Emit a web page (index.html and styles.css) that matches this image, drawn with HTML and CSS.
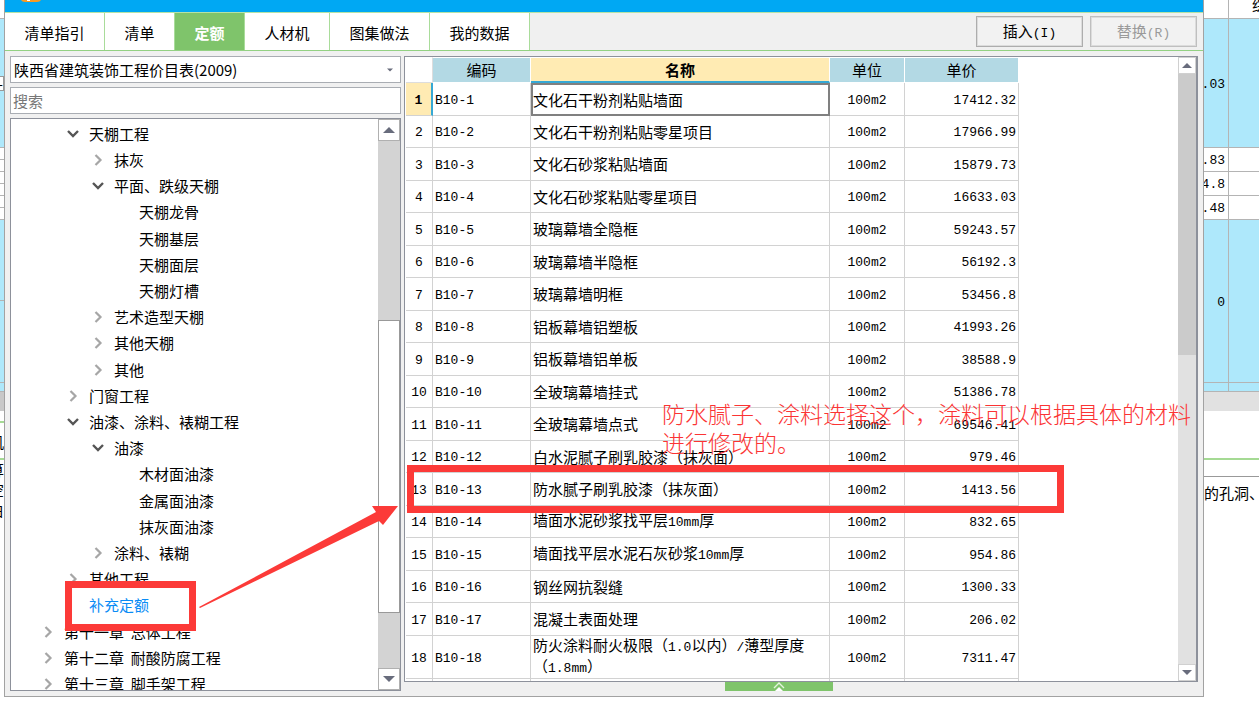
FILE: index.html
```html
<!DOCTYPE html>
<html lang="zh-CN">
<head>
<meta charset="utf-8">
<title>定额</title>
<link rel="stylesheet" href="styles.css">
</head>
<body>
<svg class="defs" aria-hidden="true">
  <symbol id="open" viewBox="0 0 12 12"><path d="M1 3 6 8 11 3" fill="none" stroke="#555" stroke-width="2.4"/></symbol>
  <symbol id="shut" viewBox="0 0 12 12"><path d="M3.5 1 8.5 6 3.5 11" fill="none" stroke="#a6a6a6" stroke-width="2.2"/></symbol>
  <symbol id="up" viewBox="0 0 12 6"><path d="M0 6 6 0 12 6Z" fill="#686c7c"/></symbol>
  <symbol id="down" viewBox="0 0 12 6"><path d="M0 0 6 6 12 0Z" fill="#686c7c"/></symbol>
</svg>
<div class="desktop">
  <div class="back back-left">
    <div class="cell h19"></div>
    <div class="cell blue h129"><span class="mini">-</span></div>
    <div class="cell h12"></div><div class="cell h12"></div><div class="cell h12"></div>
    <div class="cell h12"></div><div class="cell h12"></div><div class="cell h12"></div>
    <div class="cell blue h81"></div><div class="cell blue h82"></div>
    <div class="cell blue h9"></div>
    <div class="gray dark"></div>
    <div class="green h12"></div>
    <div class="green h37"><span>机</span></div>
    <div class="frag"><span>算</span></div>
    <div class="frag"><span>空</span></div>
    <div class="frag"><span>白</span></div>
  </div>

  <main class="dialog">
    <div class="titlebar"><svg class="logo" viewBox="0 0 20 3"><path d="M0 0h20q-1 2-4 2H4Q1 2 0 0Z" fill="#f79a22"/><path d="M6 0h3v1H6z" fill="#fff"/></svg></div>
    <nav class="toolbar">
      <button class="tab w100">清单指引</button>
      <button class="tab w70">清单</button>
      <button class="tab w70 active">定额</button>
      <button class="tab w85">人材机</button>
      <button class="tab w100">图集做法</button>
      <button class="tab w100">我的数据</button>
      <div class="actions">
        <button class="action">插入<span class="mono">(I)</span></button>
        <button class="action" disabled>替换<span class="mono">(R)</span></button>
      </div>
    </nav>
    <div class="content">
      <aside class="side">
        <div class="picker">
          <select aria-label="价目表"><option>陕西省建筑装饰工程价目表(2009)</option></select>
          <svg class="caret"><use href="#down"/></svg>
        </div>
        <input class="search" type="text" placeholder="搜索" aria-label="搜索">
        <div class="treebox">
          <ul class="tree">
            <li class="l2"><svg><use href="#open"/></svg>天棚工程</li>
            <li class="l3"><svg><use href="#shut"/></svg>抹灰</li>
            <li class="l3"><svg><use href="#open"/></svg>平面、跌级天棚</li>
            <li class="l4">天棚龙骨</li>
            <li class="l4">天棚基层</li>
            <li class="l4">天棚面层</li>
            <li class="l4">天棚灯槽</li>
            <li class="l3"><svg><use href="#shut"/></svg>艺术造型天棚</li>
            <li class="l3"><svg><use href="#shut"/></svg>其他天棚</li>
            <li class="l3"><svg><use href="#shut"/></svg>其他</li>
            <li class="l2"><svg><use href="#shut"/></svg>门窗工程</li>
            <li class="l2"><svg><use href="#open"/></svg>油漆、涂料、裱糊工程</li>
            <li class="l3"><svg><use href="#open"/></svg>油漆</li>
            <li class="l4">木材面油漆</li>
            <li class="l4">金属面油漆</li>
            <li class="l4">抹灰面油漆</li>
            <li class="l3"><svg><use href="#shut"/></svg>涂料、裱糊</li>
            <li class="l2"><svg><use href="#shut"/></svg>其他工程</li>
            <li class="l2 leaf chosen">补充定额</li>
            <li class="l1"><svg><use href="#shut"/></svg>第十一章&nbsp; 总体工程</li>
            <li class="l1"><svg><use href="#shut"/></svg>第十二章&nbsp; 耐酸防腐工程</li>
            <li class="l1"><svg><use href="#shut"/></svg>第十三章&nbsp; 脚手架工程</li>
          </ul>
          <div class="scroll tree-scroll">
            <div class="arrow"><svg><use href="#up"/></svg></div>
            <div class="before"></div><div class="thumb"></div><div class="after"></div>
            <div class="arrow"><svg><use href="#down"/></svg></div>
          </div>
        </div>
      </aside>

      <section class="right">
        <div class="gridbox">
          <div class="gridview">
          <table>
            <colgroup><col class="c-no"><col class="c-code"><col class="c-name"><col class="c-unit"><col class="c-price"></colgroup>
            <thead><tr><th class="corner"></th><th>编码</th><th class="current">名称</th><th>单位</th><th>单价</th></tr></thead>
            <tbody>
              <tr class="selected"><td>1</td><td>B10-1</td><td>文化石干粉剂粘贴墙面</td><td>100m2</td><td>17412.32</td></tr>
              <tr><td>2</td><td>B10-2</td><td>文化石干粉剂粘贴零星项目</td><td>100m2</td><td>17966.99</td></tr>
              <tr><td>3</td><td>B10-3</td><td>文化石砂浆粘贴墙面</td><td>100m2</td><td>15879.73</td></tr>
              <tr><td>4</td><td>B10-4</td><td>文化石砂浆粘贴零星项目</td><td>100m2</td><td>16633.03</td></tr>
              <tr><td>5</td><td>B10-5</td><td>玻璃幕墙全隐框</td><td>100m2</td><td>59243.57</td></tr>
              <tr><td>6</td><td>B10-6</td><td>玻璃幕墙半隐框</td><td>100m2</td><td>56192.3</td></tr>
              <tr><td>7</td><td>B10-7</td><td>玻璃幕墙明框</td><td>100m2</td><td>53456.8</td></tr>
              <tr><td>8</td><td>B10-8</td><td>铝板幕墙铝塑板</td><td>100m2</td><td>41993.26</td></tr>
              <tr><td>9</td><td>B10-9</td><td>铝板幕墙铝单板</td><td>100m2</td><td>38588.9</td></tr>
              <tr><td>10</td><td>B10-10</td><td>全玻璃幕墙挂式</td><td>100m2</td><td>51386.78</td></tr>
              <tr><td>11</td><td>B10-11</td><td>全玻璃幕墙点式</td><td>100m2</td><td>69546.41</td></tr>
              <tr><td>12</td><td>B10-12</td><td>白水泥腻子刷乳胶漆（抹灰面）</td><td>100m2</td><td>979.46</td></tr>
              <tr><td>13</td><td>B10-13</td><td>防水腻子刷乳胶漆（抹灰面）</td><td>100m2</td><td>1413.56</td></tr>
              <tr><td>14</td><td>B10-14</td><td>墙面水泥砂浆找平层<span class="mono">10mm</span>厚</td><td>100m2</td><td>832.65</td></tr>
              <tr><td>15</td><td>B10-15</td><td>墙面找平层水泥石灰砂浆<span class="mono">10mm</span>厚</td><td>100m2</td><td>954.86</td></tr>
              <tr><td>16</td><td>B10-16</td><td>钢丝网抗裂缝</td><td>100m2</td><td>1300.33</td></tr>
              <tr><td>17</td><td>B10-17</td><td>混凝土表面处理</td><td>100m2</td><td>206.02</td></tr>
              <tr class="tall"><td>18</td><td>B10-18</td><td>防火涂料耐火极限（<span class="mono">1.0</span>以内）<span class="mono">/</span>薄型厚度<br>（<span class="mono">1.8mm</span>）</td><td>100m2</td><td>7311.47</td></tr>
              <tr><td></td><td></td><td></td><td></td><td></td></tr>
            </tbody>
          </table>
          </div>
          <div class="scroll grid-scroll">
            <div class="arrow"><svg><use href="#up"/></svg></div>
            <div class="thumb"></div><div class="after"></div>
            <div class="arrow"><svg><use href="#down"/></svg></div>
          </div>
        </div>
        <button class="handle" aria-label="展开"><svg viewBox="0 0 12 9"><path d="M1 6 6 1 11 6" fill="none" stroke="#e4f5dd" stroke-width="1.4"/><path d="M2 9 6 5 10 9Z" fill="#fff"/></svg></button>
      </section>
    </div>

    <div class="mark mark-tree"></div>
    <div class="mark mark-row"></div>
    <svg class="pointer" viewBox="0 0 200 104"><path d="M0 102 177 7 173 1 199 1 184 20 180 16 1 103Z" fill="#fc3a38"/></svg>
    <p class="note">防水腻子、涂料选择这个，涂料可以根据具体的材料<br>进行修改的。</p>
  </main>

  <div class="back back-right">
    <div class="pair h19"><span></span><span class="head">综</span></div>
    <div class="pair blue h129"><span>.03</span><span></span></div>
    <div class="pair h24"><span>.83</span><span></span></div>
    <div class="pair h24"><span>4.8</span><span></span></div>
    <div class="pair h24"><span>.48</span><span></span></div>
    <div class="pair blue h163"><span>0</span><span></span></div>
    <div class="pair blue h9"><span></span><span></span></div>
    <div class="gray"></div>
    <div class="green h49"></div>
    <div class="rule"></div>
    <div class="desc">的孔洞、</div>
  </div>
</div>
</body>
</html>
```

FILE: styles.css
```css
* { box-sizing: border-box; }

body {
  margin: 0;
  background: #fff;
  color: #000;
  font: 15px/20px "Noto Sans CJK SC", sans-serif;
}

button, input, select { font: inherit; color: inherit; border-radius: 0; margin: 0; }

.defs { display: none; }
.mono { font-family: "Liberation Mono", monospace; font-size: 13px; }

.desktop {
  display: grid;
  grid-template-columns: 4px minmax(0, 1fr) 55px;
  height: 100vh;
  overflow: hidden;
}

/* Window behind the dialog */
.back { overflow: hidden; white-space: nowrap; }
.cell { border-bottom: 1px solid #b4b4b4; }
.blue { background: #aee8fb; }
.h9 { height: 9px; }
.h12 { height: 12px; }
.h19 { height: 19px; }
.h24 { height: 24px; }
.h37 { height: 37px; }
.h49 { height: 49px; }
.h81 { height: 81px; }
.h82 { height: 82px; }
.h129 { height: 129px; }
.h163 { height: 163px; }
.gray { height: 19px; background: #e1e1e1; }
.gray.dark { background: #c8c8c8; }
.green { border-bottom: 2px solid #a5da94; }
.back-left span { display: flex; justify-content: flex-end; }
.back-left .green span { padding-top: 9px; }
.back-left .cell { display: flex; align-items: center; justify-content: flex-end; }
.back-left .mini { background: #fff; border: 1px solid #999; border-left: 0; line-height: 13px; width: 4px; }
.frag { height: 20px; }

.pair {
  display: grid;
  grid-template-columns: 25px 1fr;
  align-items: stretch;
  border-bottom: 1px solid #b4b4b4;
  font: 13px/16px "Liberation Mono", monospace;
}
.pair span { display: flex; align-items: center; justify-content: flex-end; overflow: hidden; }
.pair span:first-child { border-right: 1px solid #b4b4b4; padding: 3px 3px 0 0; }
.pair .head { justify-content: flex-start; padding-left: 23px; font: 15px/10px "Noto Sans CJK SC", sans-serif; align-items: flex-start; }
.rule { height: 17px; border-bottom: 1px solid #999; }
.desc { padding-top: 6px; overflow: hidden; }

/* Dialog */
.dialog {
  position: relative;
  display: flex;
  flex-direction: column;
  margin-bottom: 4px;
  border: solid #a2a2a2;
  border-width: 0 1px 1px;
  background: #f0f0f0;
  min-height: 0;
}
.titlebar { height: 12px; flex: none; background: #00a8f3; padding-left: 16px; }
.logo { display: block; width: 20px; height: 3px; }

.toolbar {
  display: flex;
  flex: none;
  height: 39px;
  border-top: 1px solid #b5e3a7;
  border-bottom: 1px solid #93d183;
}
.tab { border: 0; border-right: 1px solid #a9dc9a; background: #fff; padding: 2px 0 0; }
.tab.active { background: #7fc46b; color: #fff; font-weight: 700; }
.w70 { width: 70px; }
.w85 { width: 85px; }
.w100 { width: 100px; }
.actions { display: flex; gap: 7px; margin-left: auto; padding: 3px 6px 3px 0; }
.action { width: 107px; border: 1px solid #adadad; outline: 1px solid #dcdcdc; outline-offset: -2px; background: #f2f2f2; padding: 2px 0 0; }
.action:disabled { color: #9a9a9a; border-color: #bfbfbf; }

.content { flex: 1; display: flex; gap: 3px; min-height: 0; padding: 5px 5px 0; }
.side { flex: none; width: 391px; display: flex; flex-direction: column; gap: 4px; padding-bottom: 5px; }
.picker { display: flex; align-items: center; height: 27px; border: 1px solid #a9adb3; background: #fff; }
.picker select { flex: 1; appearance: none; border: 0; background: none; padding: 0 3px; height: 25px; }
.caret { width: 6px; height: 4px; margin-right: 7px; }
.caret use { width: 6px; height: 4px; }
.search { height: 27px; width: 100%; border: 1px solid #a9adb3; background: #fff; padding: 0 2px; }
.search::placeholder { color: #777; opacity: 1; }

.treebox { flex: 1; display: flex; min-height: 0; border: 1px solid #8d919b; background: #fff; }
.tree { flex: 1; margin: 0; padding: 2px 0 0; list-style: none; overflow: hidden; }
.tree li { display: flex; align-items: center; height: 26px; gap: 10px; white-space: nowrap; }
.tree li:nth-child(5n) { height: 27px; }
.tree svg { width: 12px; height: 12px; }
.tree .l1 { padding-left: 31px; }
.tree .l2 { padding-left: 56px; }
.tree .l3 { padding-left: 81px; }
.tree .l4 { padding-left: 128px; }
.tree .leaf { padding-left: 78px; }
.tree .chosen { color: #0a8cf5; }

.scroll { flex: none; display: flex; flex-direction: column; }
.arrow { display: flex; align-items: center; justify-content: center; border: 1px solid #b0b0b0; background: #fff; flex: none; }
.arrow svg { width: 12px; height: 6px; }
.tree-scroll { width: 22px; background: #d3d3d3; }
.tree-scroll .arrow { height: 22px; }
.tree-scroll .before { flex: 180; }
.tree-scroll .thumb { flex: 292; background: #fff; border: 1px solid #999; }
.tree-scroll .after { flex: 55; }
.grid-scroll { width: 18px; background: #e1e1e1; }
.grid-scroll .arrow { height: 17px; border-color: #d0d0d0; }
.grid-scroll .arrow svg { width: 10px; height: 5px; }
.grid-scroll .thumb { flex: 281; background: #cbcbcb; }
.grid-scroll .after { flex: 309; }

.right { flex: 1; min-width: 0; display: flex; flex-direction: column; padding-bottom: 5px; }
.gridbox { flex: 1; min-height: 0; display: flex; border: 1px solid #8d919b; border-right-width: 2px; background: #fff; }
.gridview { flex: 1; min-width: 0; overflow: hidden; padding: 0 0 0 1px; }
.handle { align-self: center; flex: none; width: 108px; height: 9px; margin-right: 44px; padding: 0; border: 0; background: #7fc46b; display: flex; justify-content: center; }
.handle svg { width: 12px; height: 9px; }

table { table-layout: fixed; width: 613px; border-collapse: separate; border-spacing: 0; }
.c-no { width: 27px; }
.c-code { width: 98px; }
.c-name { width: 299px; }
.c-unit { width: 75px; }
.c-price { width: 114px; }
th { height: 26px; padding: 0; background: #b3d9e4; border: solid #fff; border-width: 1px 1px 1px 0; font-weight: 400; }
th.corner { background: #fff; border-right-color: #ddd; border-bottom-color: #ddd; }
th.current { background: #ffebb3; font-weight: 700; border-bottom: 2px solid #35a8d5; }
td {
  height: 33px;
  padding: 3px 2px 0;
  border: solid #d2d2d2;
  border-width: 0 1px 1px 0;
  font: 13px/16px "Liberation Mono", "Noto Sans CJK SC", monospace;
}
tr:nth-child(even) td { height: 32px; }
tbody tr.tall td { height: 41px; }
td:nth-child(1), td:nth-child(4) { text-align: center; }
td:nth-child(1) { padding: 3px 0 0; }
td:nth-child(3) { padding-top: 0; font: 15px/18px "Noto Sans CJK SC", sans-serif; white-space: nowrap; }
td:nth-child(5) { text-align: right; }
.selected td:nth-child(1) { background: #ffebb3; font-weight: 700; border-right: 2px solid #35a8d5; }
.selected td:nth-child(3) { border: 2px solid #808080; padding: 0; }

/* Red review marks drawn over the dialog */
.mark { position: absolute; border: 7px solid #fc3a38; }
.mark-tree { left: 60px; top: 581px; width: 131px; height: 50px; }
.mark-row { left: 402px; top: 465px; width: 657px; height: 48px; }
.pointer { position: absolute; left: 194px; top: 505px; width: 200px; height: 104px; }
.note {
  position: absolute;
  left: 657px;
  top: 399px;
  margin: 0;
  color: #fb3434;
  font-size: 23px;
  font-weight: 300;
  line-height: 29px;
  white-space: nowrap;
}
```
